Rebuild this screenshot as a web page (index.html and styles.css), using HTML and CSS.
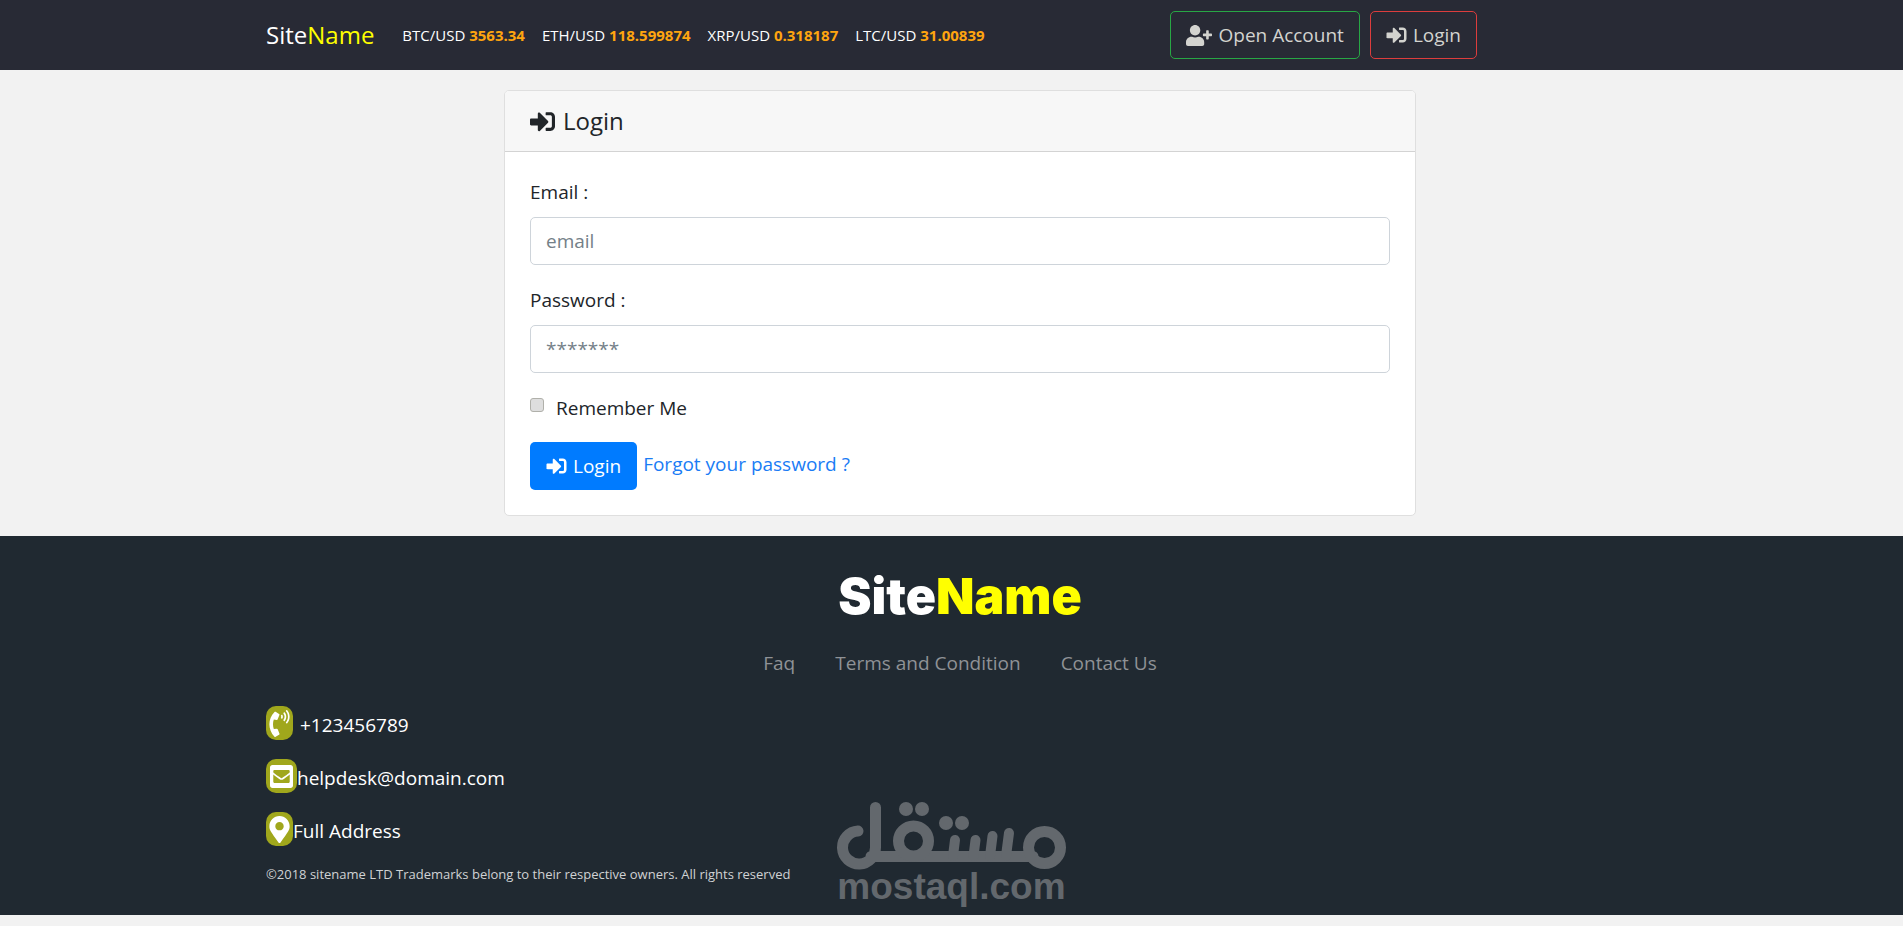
FILE: index.html
```html
<!DOCTYPE html>
<html lang="en">
<head>
<meta charset="utf-8">
<title>SiteName - Login</title>
<link rel="stylesheet" href="styles.css">
</head>
<body>
<svg class="sprite" aria-hidden="true">
  <symbol id="sign-in" viewBox="0 0 512 512"><path d="M416 448h-84c-6.600 0-12-5.400-12-12v-40c0-6.600 5.400-12 12-12h84c17.700 0 32-14.300 32-32V160c0-17.700-14.300-32-32-32h-84c-6.600 0-12-5.400-12-12V76c0-6.600 5.400-12 12-12h84c53 0 96 43 96 96v192c0 53-43 96-96 96zm-47-201L201 79c-15-15-41-4.500-41 17v96H24c-13.300 0-24 10.700-24 24v96c0 13.300 10.700 24 24 24h136v96c0 21.500 26 32 41 17l168-168c9.300-9.400 9.300-24.600 0-34z"/></symbol>
  <symbol id="user-plus" viewBox="0 0 640 512"><path d="M624 208h-64v-64c0-8.800-7.200-16-16-16h-32c-8.800 0-16 7.200-16 16v64h-64c-8.800 0-16 7.200-16 16v32c0 8.800 7.200 16 16 16h64v64c0 8.800 7.200 16 16 16h32c8.800 0 16-7.200 16-16v-64h64c8.800 0 16-7.200 16-16v-32c0-8.800-7.200-16-16-16zm-400 48c70.700 0 128-57.300 128-128S294.700 0 224 0 96 57.300 96 128s57.300 128 128 128zm89.600 32h-16.700c-22.200 10.200-46.900 16-72.900 16s-50.600-5.800-72.900-16h-16.700C60.200 288 0 348.200 0 422.400V464c0 26.500 21.500 48 48 48h352c26.500 0 48-21.500 48-48v-41.600c0-74.200-60.200-134.400-134.400-134.400z"/></symbol>
  <symbol id="marker" viewBox="0 0 384 512"><path d="M172.268 501.670C26.970 291.031 0 269.413 0 192 0 85.961 85.961 0 192 0s192 85.961 192 192c0 77.413-26.970 99.031-172.268 309.670-9.535 13.774-29.930 13.773-39.464 0zM192 272c44.183 0 80-35.817 80-80s-35.817-80-80-80-80 35.817-80 80 35.817 80 80 80z"/></symbol>
  <symbol id="envelope" viewBox="0 0 448 512"><path d="M400 32H48C21.490 32 0 53.490 0 80v352c0 26.510 21.490 48 48 48h352c26.510 0 48-21.490 48-48V80c0-26.510-21.490-48-48-48zM178.117 262.104C87.429 196.287 88.353 196.121 64 177.167V152c0-13.255 10.745-24 24-24h272c13.255 0 24 10.745 24 24v25.167c-24.371 18.969-23.434 19.124-114.117 84.938-10.500 7.655-31.392 26.120-45.883 25.894-14.503.218-35.367-18.227-45.883-25.895zM384 217.775V360c0 13.255-10.745 24-24 24H88c-13.255 0-24-10.745-24-24V217.775c13.958 10.794 33.329 25.236 95.303 70.214 14.162 10.341 37.975 32.145 64.697 32.010 26.887.134 51.036-22.041 64.720-32.025 61.958-44.964 81.325-59.406 95.280-70.199z"/></symbol>
  <symbol id="phone" viewBox="0 0 384 512"><path d="M97.333 506.966c-129.874-129.874-129.681-340.252 0-469.933 5.698-5.698 14.527-6.632 21.263-2.422l64.817 40.513a17.187 17.187 0 0 1 6.849 20.958l-32.408 81.021a17.188 17.188 0 0 1-17.669 10.719l-55.810-5.580c-21.051 58.261-20.612 122.471 0 179.515l55.811-5.581a17.188 17.188 0 0 1 17.669 10.719l32.408 81.022a17.188 17.188 0 0 1-6.849 20.958l-64.817 40.513a17.190 17.190 0 0 1-21.264-2.422zM247.126 95.473c11.832 20.047 11.832 45.008 0 65.055-3.950 6.693-13.108 7.959-18.718 2.581l-5.975-5.726c-3.911-3.748-4.793-9.622-2.261-14.410a32.063 32.063 0 0 0 0-29.945c-2.533-4.788-1.650-10.662 2.261-14.410l5.975-5.726c5.610-5.378 14.768-4.112 18.718 2.581zm91.787-91.187c60.140 71.604 60.092 175.882 0 247.428-4.474 5.327-12.530 5.746-17.552.933l-5.798-5.557c-4.560-4.371-4.977-11.529-.930-16.379 49.687-59.538 49.646-145.933 0-205.422-4.047-4.850-3.631-12.008.930-16.379l5.798-5.557c5.022-4.813 13.078-4.394 17.552.933zm-45.972 44.941c36.050 46.322 36.108 111.149 0 157.546-4.390 5.641-12.697 6.251-17.856 1.304l-5.818-5.579c-4.400-4.219-4.998-11.095-1.285-15.931 26.536-34.564 26.534-82.572 0-117.134-3.713-4.836-3.115-11.711 1.285-15.931l5.818-5.579c5.159-4.947 13.466-4.337 17.856 1.304z"/></symbol>
</svg>

<header class="topbar">
  <div class="container topbar-inner">
    <a class="brand" href="#">Site<span class="accent">Name</span></a>
    <ul class="ticker">
      <li>BTC/USD <b>3563.34</b></li>
      <li>ETH/USD <b>118.599874</b></li>
      <li>XRP/USD <b>0.318187</b></li>
      <li>LTC/USD <b>31.00839</b></li>
    </ul>
    <nav class="actions">
      <a class="btn btn-success" href="#"><svg class="icon icon-wide"><use href="#user-plus"/></svg>Open Account</a>
      <a class="btn btn-danger" href="#"><svg class="icon"><use href="#sign-in"/></svg>Login</a>
    </nav>
  </div>
</header>

<main class="container">
  <section class="card">
    <h1 class="card-header"><svg class="icon icon-large"><use href="#sign-in"/></svg>Login</h1>
    <form class="card-body">
      <div class="field">
        <label for="email">Email :</label>
        <input class="control" id="email" type="email" placeholder="email">
      </div>
      <div class="field">
        <label for="password">Password :</label>
        <input class="control" id="password" type="password" placeholder="*******">
      </div>
      <div class="check">
        <input id="remember" type="checkbox">
        <label for="remember">Remember Me</label>
      </div>
      <div class="submit">
        <button class="btn btn-primary" type="submit"><svg class="icon"><use href="#sign-in"/></svg>Login</button>
        <a class="forgot" href="#">Forgot your password ?</a>
      </div>
    </form>
  </section>
</main>

<footer class="footer">
  <div class="container">
    <h2 class="footer-brand">Site<span class="accent">Name</span></h2>
    <ul class="footer-links">
      <li><a href="#">Faq</a></li>
      <li><a href="#">Terms and Condition</a></li>
      <li><a href="#">Contact Us</a></li>
    </ul>
    <ul class="contacts">
      <li class="phone"><span class="badge"><svg><use href="#phone"/></svg></span><span class="contact-text">+123456789</span></li>
      <li><span class="badge badge-wide"><svg><use href="#envelope"/></svg></span><span class="contact-text">helpdesk@domain.com</span></li>
      <li><span class="badge"><svg><use href="#marker"/></svg></span><span class="contact-text">Full Address</span></li>
    </ul>
    <p class="copyright">©2018 sitename LTD Trademarks belong to their respective owners. All rights reserved</p>
  </div>
  <div class="watermark">
    <svg viewBox="0 0 229 68" role="img" aria-label="مستقل">
      <g fill="none" stroke="currentColor" stroke-width="11" stroke-linecap="round">
        <path d="M21 29A16.500 16.500 0 1 0 38.500 45V5.500M34 54.500H196"/>
        <circle cx="76.500" cy="39" r="15"/>
        <circle cx="207.500" cy="45.500" r="16"/>
        <path stroke-width="10" d="M118 38l-2 16M138.500 38l-2 16M155.500 34l-2.500 20M172 31l-3 23"/>
      </g>
      <g fill="currentColor">
        <circle cx="69" cy="7" r="7"/><circle cx="85" cy="7" r="7"/>
        <circle cx="109" cy="21" r="7"/><circle cx="125" cy="21" r="7"/>
      </g>
    </svg>
    <span>mostaql.com</span>
  </div>
</footer>
</body>
</html>
```

FILE: styles.css
```css
* { box-sizing: border-box; }

body {
  margin: 0;
  background: #f2f2f2;
  color: #212529;
  font: 19px/30px "Open Sans", "Noto Sans", sans-serif;
}

a { text-decoration: none; }
ul { margin: 0; padding: 0; list-style: none; }
.sprite { position: absolute; width: 0; height: 0; }
.accent { color: #ff0; }

.container {
  max-width: 1405px;
  margin: 0 auto;
  padding-left: 17px;
}

.topbar { background: #282a35; }
.topbar-inner {
  display: flex;
  align-items: center;
  padding-top: 11px;
  padding-bottom: 11px;
}
.brand { margin-right: 28px; color: #fff; font-size: 24px; }
.ticker { display: flex; gap: 17px; color: #fff; font-size: 15px; }
.ticker b { color: #ffa50f; }
.actions { display: flex; gap: 10px; margin-left: auto; margin-right: 177px; }

.btn {
  display: inline-flex;
  align-items: center;
  gap: 6px;
  height: 48px;
  padding: 0 15px;
  border: 1px solid transparent;
  border-radius: 5px;
  background: transparent;
  color: #d3d3cf;
  font: inherit;
}
.btn-success { border-color: #28a745; }
.btn-danger { border-color: #dc3d3d; }
.btn-primary { background: #007bff; color: #fff; }

.icon { flex: none; width: 21px; height: 20px; fill: currentColor; }
.icon-wide { width: 26px; height: 21px; }
.icon-large { width: 25px; height: 25px; }

.card {
  width: 66%;
  min-width: 320px;
  max-width: 912px;
  margin: 20px auto;
  border: 1px solid #dfdfdf;
  border-radius: 5px;
  background: #fff;
}
.card-header {
  display: flex;
  align-items: center;
  gap: 8px;
  margin: 0;
  padding: 15px 25px;
  border-bottom: 1px solid #d3d3d3;
  border-radius: 4px 4px 0 0;
  background: #f7f7f7;
  font-size: 24px;
  font-weight: 500;
}
.card-body { padding: 25px; }
.field { margin-bottom: 20px; }
.field label { display: block; margin-bottom: 10px; }
.control {
  display: block;
  width: 100%;
  height: 48px;
  padding: 0 15px;
  border: 1px solid #ced4da;
  border-radius: 5px;
  background: #fff;
  color: #495057;
  font: inherit;
}
.control::placeholder { color: #748088; opacity: 1; }
.check { display: flex; gap: 12px; margin-bottom: 19px; }
.check input {
  appearance: none;
  width: 14px;
  height: 14px;
  margin: 5px 0 0;
  border: 1px solid #b0b0aa;
  border-radius: 3px;
  background: #dedede;
}
.submit { display: flex; gap: 6px; }
.forgot { padding-top: 7px; color: #1a7cf5; }

.footer {
  position: relative;
  padding: 35px 0 26px;
  background: #202931;
}
.footer-brand {
  margin: 0 0 27px;
  color: #fff;
  font: 900 50px/50px Inter, sans-serif;
  text-align: center;
}
.footer-links {
  display: flex;
  justify-content: center;
  gap: 40px;
  margin-bottom: 28px;
}
.footer-links a { color: #8f9296; }
.contacts { margin-bottom: 13px; color: #fff; }
.contacts li { display: flex; }
.contacts li + li { margin-top: 19px; }
.contacts .phone { gap: 7px; }
.contact-text { padding-top: 4px; }
.badge {
  display: flex;
  align-items: center;
  justify-content: center;
  width: 27px;
  height: 34px;
  border-radius: 10px;
  background: #a0a71c;
}
.badge-wide { width: 31px; }
.badge svg { width: 23px; height: 27px; fill: #fff; }
.copyright { margin: 0; color: #d0d2d4; font-size: 13px; }

.watermark {
  position: absolute;
  bottom: 11px;
  left: 44%;
  width: 229px;
  color: #63686d;
  font: bold 37px/34px "Liberation Sans", Arial, sans-serif;
}
.watermark svg { display: block; width: 100%; }
```
